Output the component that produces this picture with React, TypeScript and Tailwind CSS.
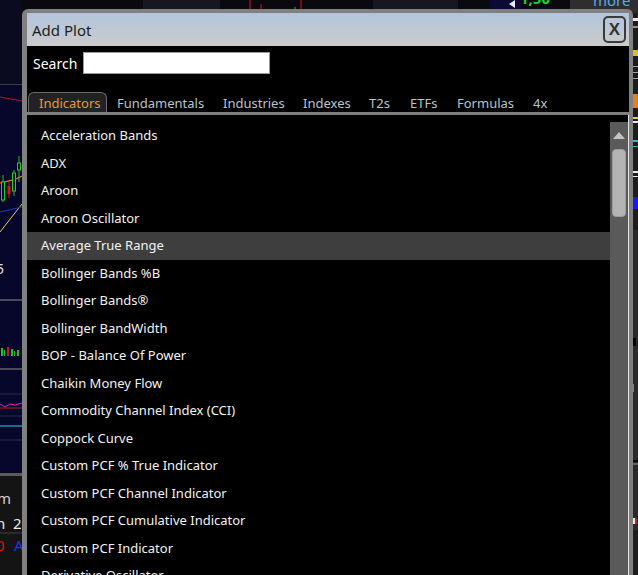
import React from "react";

// list of indicators shown in the Add Plot dialog
const items = [
  "Acceleration Bands",
  "ADX",
  "Aroon",
  "Aroon Oscillator",
  "Average True Range",
  "Bollinger Bands %B",
  "Bollinger Bands®",
  "Bollinger BandWidth",
  "BOP - Balance Of Power",
  "Chaikin Money Flow",
  "Commodity Channel Index (CCI)",
  "Coppock Curve",
  "Custom PCF % True Indicator",
  "Custom PCF Channel Indicator",
  "Custom PCF Cumulative Indicator",
  "Custom PCF Indicator",
  "Derivative Oscillator",
];

const tabs = [
  { label: "Indicators", cls: "w-[79px]" },
  { label: "Fundamentals", cls: "w-[106px]" },
  { label: "Industries", cls: "w-[80px]" },
  { label: "Indexes", cls: "w-[66px]" },
  { label: "T2s", cls: "w-[41px]" },
  { label: "ETFs", cls: "w-[47px]" },
  { label: "Formulas", cls: "w-[76px]" },
  { label: "4x", cls: "w-[34px]" },
];

// chart behind the dialog (only the edges are visible)
function ChartBackdrop() {
  return (
    <svg className="absolute inset-0" width="638" height="575" viewBox="0 0 638 575">
      {/* top strip */}
      <rect x="0" y="0" width="638" height="13" fill="#09090f" />
      <rect x="143" y="0" width="77" height="9" fill="#17171f" />
      <rect x="373" y="0" width="85" height="9" fill="#17171f" />
      <rect x="490" y="0" width="32" height="9" fill="#0a0a34" />
      <rect x="570" y="0" width="68" height="13" fill="#2e2e2e" />
      <line x1="250" y1="0" x2="250" y2="9" stroke="#e01414" strokeWidth="1" />
      <line x1="261" y1="4" x2="261" y2="9" stroke="#e01414" strokeWidth="1" />
      <line x1="301" y1="0" x2="301" y2="9" stroke="#e01414" strokeWidth="1" />
      <line x1="295" y1="7" x2="295" y2="9" stroke="#20c020" strokeWidth="1" />
      <polygon points="509,4 515,0 515,8" fill="#e8e8e8" />

      {/* left strip: price panel */}
      <rect x="0" y="0" width="22" height="84" fill="#0b0b1f" />
      <rect x="0" y="84" width="22" height="1" fill="#3a3a4c" />
      <rect x="0" y="85" width="22" height="214" fill="#07072c" />
      <line x1="0" y1="97" x2="22" y2="101" stroke="#b01818" strokeWidth="1" />
      <path d="M0 183 C6 181 12 182 22 176" stroke="#e07020" strokeWidth="1.2" fill="none" />
      <line x1="0" y1="232" x2="22" y2="204" stroke="#e0d030" strokeWidth="1" />
      <line x1="0" y1="212" x2="22" y2="207" stroke="#2030e0" strokeWidth="1" />
      {/* candles */}
      <line x1="3" y1="175" x2="3" y2="202" stroke="#20c020" />
      <rect x="1.5" y="182" width="3" height="18" fill="#0a0a2c" stroke="#20d020" />
      <line x1="9" y1="182" x2="9" y2="198" stroke="#d01818" />
      <rect x="7.5" y="186" width="3" height="8" fill="#d01818" />
      <line x1="14" y1="170" x2="14" y2="196" stroke="#20c020" />
      <rect x="12.5" y="173" width="3" height="18" fill="#0a0a2c" stroke="#20d020" />
      <line x1="19" y1="156" x2="19" y2="182" stroke="#20c020" />
      <rect x="17.5" y="163" width="3" height="7" fill="#0a0a2c" stroke="#20d020" />

      {/* left strip: volume panel */}
      <rect x="0" y="299" width="22" height="2" fill="#4a4a58" />
      <rect x="0" y="301" width="22" height="67" fill="#07072c" />
      <rect x="1" y="348" width="2" height="8" fill="#20c020" />
      <rect x="4" y="350" width="1" height="6" fill="#20c020" />
      <rect x="7" y="347" width="2" height="9" fill="#d01818" />
      <rect x="11" y="349" width="2" height="7" fill="#20c020" />
      <rect x="14" y="351" width="1" height="5" fill="#20c020" />
      <rect x="17" y="350" width="2" height="6" fill="#20c020" />
      <rect x="0" y="368" width="22" height="2" fill="#4a4a58" />

      {/* left strip: oscillator panel */}
      <rect x="0" y="370" width="22" height="103" fill="#07072c" />
      <line x1="0" y1="394" x2="22" y2="394" stroke="#2a2a50" />
      <line x1="0" y1="416" x2="22" y2="416" stroke="#2a2a50" />
      <line x1="0" y1="440" x2="22" y2="440" stroke="#2a2a50" />
      <line x1="0" y1="408" x2="22" y2="408" stroke="#c01818" />
      <path d="M0 404 L5 407 L10 404 L15 405 L22 403" stroke="#e020d0" fill="none" />
      <line x1="0" y1="426" x2="22" y2="426" stroke="#20a8b8" strokeWidth="1.3" />

      {/* left strip: bottom table */}
      <rect x="0" y="473" width="22" height="3" fill="#5a5a5a" />
      <rect x="0" y="476" width="22" height="99" fill="#141414" />
      <line x1="0" y1="533" x2="22" y2="533" stroke="#404040" />

      {/* right strip */}
      <rect x="633" y="13" width="5" height="562" fill="#1c1c1c" />
      <rect x="633" y="18" width="5" height="3" fill="#e8e8e8" />
      <rect x="633" y="26" width="5" height="2" fill="#909090" />
      <rect x="633" y="50" width="5" height="6" fill="#d8c020" />
      <rect x="633" y="66" width="5" height="1" fill="#a0a0a0" />
      <rect x="633" y="72" width="5" height="1" fill="#a0a0a0" />
      <rect x="633" y="78" width="5" height="1" fill="#a0a0a0" />
      <rect x="633" y="94" width="5" height="14" fill="#e08020" />
      <rect x="633" y="117" width="5" height="2" fill="#e0d040" />
      <rect x="633" y="121" width="5" height="2" fill="#e8e8e8" />
      <rect x="633" y="140" width="5" height="2" fill="#20c0c8" />
      <rect x="633" y="146" width="5" height="1" fill="#20c0c8" />
      <rect x="633" y="171" width="5" height="2" fill="#e8e8e8" />
      <rect x="633" y="176" width="5" height="1" fill="#e8e8e8" />
      <rect x="633" y="197" width="5" height="12" fill="#1818f0" />
      <rect x="633" y="230" width="5" height="300" fill="#2a2a2a" />
      <rect x="633" y="338" width="3" height="8" fill="#050505" />
      <rect x="633" y="384" width="1" height="8" fill="#5090c0" />
      <rect x="633" y="460" width="5" height="2" fill="#0a0a0a" />
      <rect x="633" y="463" width="5" height="2" fill="#606060" />
      <rect x="633" y="518" width="2" height="6" fill="#e8e8e8" />
      <rect x="635" y="518" width="2" height="6" fill="#c02020" />
    </svg>
  );
}

export default function App() {
  return (
    <div
      className="relative w-[638px] h-[575px] overflow-hidden bg-[#09090f]"
      style={{ fontFamily: '"Noto Sans", "Open Sans", sans-serif' }}
    >
      <ChartBackdrop />

      {/* texts peeking out from behind the dialog */}
      <span className="absolute left-[-4px] top-[262px] text-[14px] leading-none text-[#e0e0e0]">5</span>
      <span className="absolute left-[-3px] top-[491px] text-[15px] leading-none text-[#d0d0d0]">m</span>
      <span className="absolute left-[-4px] top-[516px] text-[15px] leading-none text-[#e8e8e8]">n&nbsp;&nbsp;2</span>
      <span className="absolute left-[-4px] top-[538px] text-[15px] leading-none text-[#e01010]">0</span>
      <span className="absolute left-[14px] top-[538px] text-[15px] leading-none text-[#1838f0]">A</span>
      <span className="absolute left-[593px] top-[-7px] text-[15px] leading-none text-[#5aa8e8]">more</span>
      <span className="absolute left-[520px] top-[-9px] text-[15px] leading-none font-bold text-[#20d020]">1,50</span>

      {/* Add Plot dialog */}
      <div className="absolute left-[22px] top-[9px] w-[611px] h-[600px] flex flex-col bg-black border-[#808080] border-t-4 border-l-[5px] border-r-4 rounded-t-[6px]">
        {/* title bar */}
        <div className="h-[33px] flex items-center justify-between pl-[5px] pr-[3px] bg-gradient-to-b from-[#b2c5dd] to-[#cbcbcb]">
          <span className="text-[15px] text-[#1e1e1e] pt-[2px]">Add Plot</span>
          <div className="w-[23px] h-[27px] flex items-center justify-center border-2 border-[#3a3a3a] rounded-[5px] text-[#333] text-[17px] font-bold leading-none" style={{ fontFamily: '"Liberation Sans", Arial, sans-serif' }}>
            X
          </div>
        </div>

        {/* search */}
        <div className="flex items-center pt-[6px] pl-[6px] gap-[6px]">
          <span className="text-[14px] text-white">Search</span>
          <div className="w-[187px] h-[22px] bg-white border border-[#9a9a9a]" />
        </div>

        {/* tabs */}
        <div className="flex mt-[18px] pl-[1px] h-[20px]">
          {tabs.map((t, i) => (
            <div
              key={t.label}
              className={`${t.cls} h-[20px] pl-[10px] pt-[3px] flex items-center text-[13px] whitespace-nowrap ${
                i === 0
                  ? "bg-[#222222] border border-b-0 border-[#6a6a6a] rounded-t-[6px] text-[#e89a2c] pl-[9px]"
                  : "text-[#b9c3cc]"
              }`}
            >
              {t.label}
            </div>
          ))}
        </div>
        <div className="h-[3px] bg-[#808080]" />

        {/* list + scrollbar */}
        <div className="flex flex-1 border-r border-[#e4e4e4]">
          <div className="flex-1 pt-[7px]">
            {items.map((name, i) => (
              <div
                key={name}
                className={`h-[27.5px] flex items-center pl-[14px] text-[13px] text-[#f2f2f2] whitespace-nowrap ${
                  i === 4 ? "bg-[#3e3e3e]" : ""
                }`}
              >
                {name}
              </div>
            ))}
          </div>
          <div className="w-[18px] mt-[7px] bg-[#5a5a5a] flex flex-col items-center">
            <svg width="12" height="7" viewBox="0 0 12 7" className="mt-[10px]">
              <polygon points="6,0 12,7 0,7" fill="#c4c4c4" />
            </svg>
            <div className="mt-[10px] w-[14px] h-[68px] bg-[#b4b4b4] rounded-[4px] border border-[#9c9c9c]" />
          </div>
        </div>
      </div>
    </div>
  );
}
